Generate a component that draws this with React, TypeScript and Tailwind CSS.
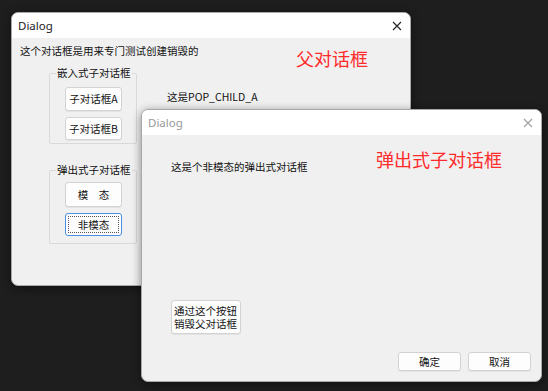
// Two Win32 dialogs on a dark desktop: parent dialog and a modeless popup child

import type { ReactNode } from "react";

const cjk = { fontFamily: '"Microsoft YaHei", "Noto Sans CJK SC", "Noto Sans", sans-serif' };
const latin = { fontFamily: '"Segoe UI", "Noto Sans", "Open Sans", sans-serif' };

function CloseIcon({ color }: { color: string }) {
  return (
    <svg width="10" height="10" viewBox="0 0 10 10">
      <path d="M1 1 L9 9 M9 1 L1 9" stroke={color} strokeWidth="1.1" fill="none" />
    </svg>
  );
}

function Button({
  children,
  className = "",
  focused = false,
}: {
  children: ReactNode;
  className?: string;
  focused?: boolean;
}) {
  return (
    <div
      className={`flex items-center justify-center whitespace-pre rounded-[3px] border bg-[#fdfdfd] text-[10.5px] leading-[12px] text-[#111] ${
        focused ? "border-[#4a90e2] p-[2px]" : "border-[#d3d3d3] shadow-[0_1px_0_rgba(0,0,0,0.05)]"
      } ${className}`}
    >
      {focused ? (
        <div className="flex h-full w-full items-center justify-center border border-dotted border-[#555]">
          {children}
        </div>
      ) : (
        children
      )}
    </div>
  );
}

function GroupBox({ label, children, className = "" }: { label: string; children: ReactNode; className?: string }) {
  return (
    <fieldset className={`w-[88px] rounded-[2px] border border-[#d9d9d9] ${className}`}>
      <legend className="ml-[6px] px-[1px] text-[10.5px] leading-[12px] text-[#111]">{label}</legend>
      <div className="flex flex-col items-center gap-[6px] pl-[1px]">{children}</div>
    </fieldset>
  );
}

function Window({
  title,
  active,
  className = "",
  children,
}: {
  title: string;
  active: boolean;
  className?: string;
  children: ReactNode;
}) {
  return (
    <div
      className={`absolute flex flex-col overflow-hidden rounded-[7px] border border-[#a9a9a9] bg-[#f0f0f0] shadow-[0_2px_10px_rgba(0,0,0,0.45)] ${className}`}
    >
      <div className="flex h-[25px] flex-shrink-0 items-center justify-between bg-white pl-[6px] pr-[8px]">
        <span style={latin} className={`text-[11.5px] ${active ? "text-[#1a1a1a]" : "text-[#9a9a9a]"}`}>
          {title}
        </span>
        <CloseIcon color={active ? "#222" : "#a0a0a0"} />
      </div>
      {children}
    </div>
  );
}

export default function App() {
  return (
    <div className="relative h-[391px] w-[548px] overflow-hidden bg-[#1e1e1e]" style={cjk}>
      {/* Parent dialog */}
      <Window title="Dialog" active className="left-[11px] top-[12px] h-[274px] w-[400px]">
        <div className="relative flex flex-1 flex-col pl-[8px] pt-[7px] text-[#111]">
          <p className="text-[10.5px] leading-[12px]">这个对话框是用来专门测试创建销毁的</p>

          <div className="mt-[10px] flex items-start">
            <div className="ml-[29px] flex flex-col">
              <GroupBox label="嵌入式子对话框" className="h-[77px]">
                <Button className="mt-[8px] h-[24px] w-[57px]">子对话框A</Button>
                <Button className="h-[23px] w-[57px]">子对话框B</Button>
              </GroupBox>
              <GroupBox label="弹出式子对话框" className="mt-[20px] h-[80px]">
                <Button className="mt-[6px] h-[25px] w-[57px]">{"模　态"}</Button>
                <Button focused className="h-[23px] w-[57px]">非模态</Button>
              </GroupBox>
            </div>
            <p className="ml-[30px] mt-[24px] text-[10.5px] leading-[12px]">这是POP_CHILD_A</p>
          </div>

          <span className="absolute left-[284px] top-[11px] text-[18px] leading-[18px] text-[#ff2a2a]">父对话框</span>
        </div>
      </Window>

      {/* Modeless popup child dialog */}
      <Window title="Dialog" active={false} className="left-[141px] top-[109px] h-[273px] w-[401px]">
        <div className="relative flex flex-1 flex-col pl-[29px] pt-[26px] text-[#111]">
          <p className="text-[10.5px] leading-[12px]">这是个非模态的弹出式对话框</p>

          <Button className="mt-[127px] h-[34px] w-[70px] flex-col !items-start px-[2px]">
            <span className="block leading-[13px]">通过这个按钮</span>
            <span className="block leading-[13px]">销毁父对话框</span>
          </Button>

          <div className="mt-auto flex justify-end gap-[7px] pb-[10px] pr-[10px]">
            <Button className="h-[19px] w-[63px]">确定</Button>
            <Button className="h-[19px] w-[63px]">取消</Button>
          </div>

          <span className="absolute left-[234px] top-[15px] text-[18px] leading-[18px] text-[#ff2a2a]">弹出式子对话框</span>
        </div>
      </Window>
    </div>
  );
}
